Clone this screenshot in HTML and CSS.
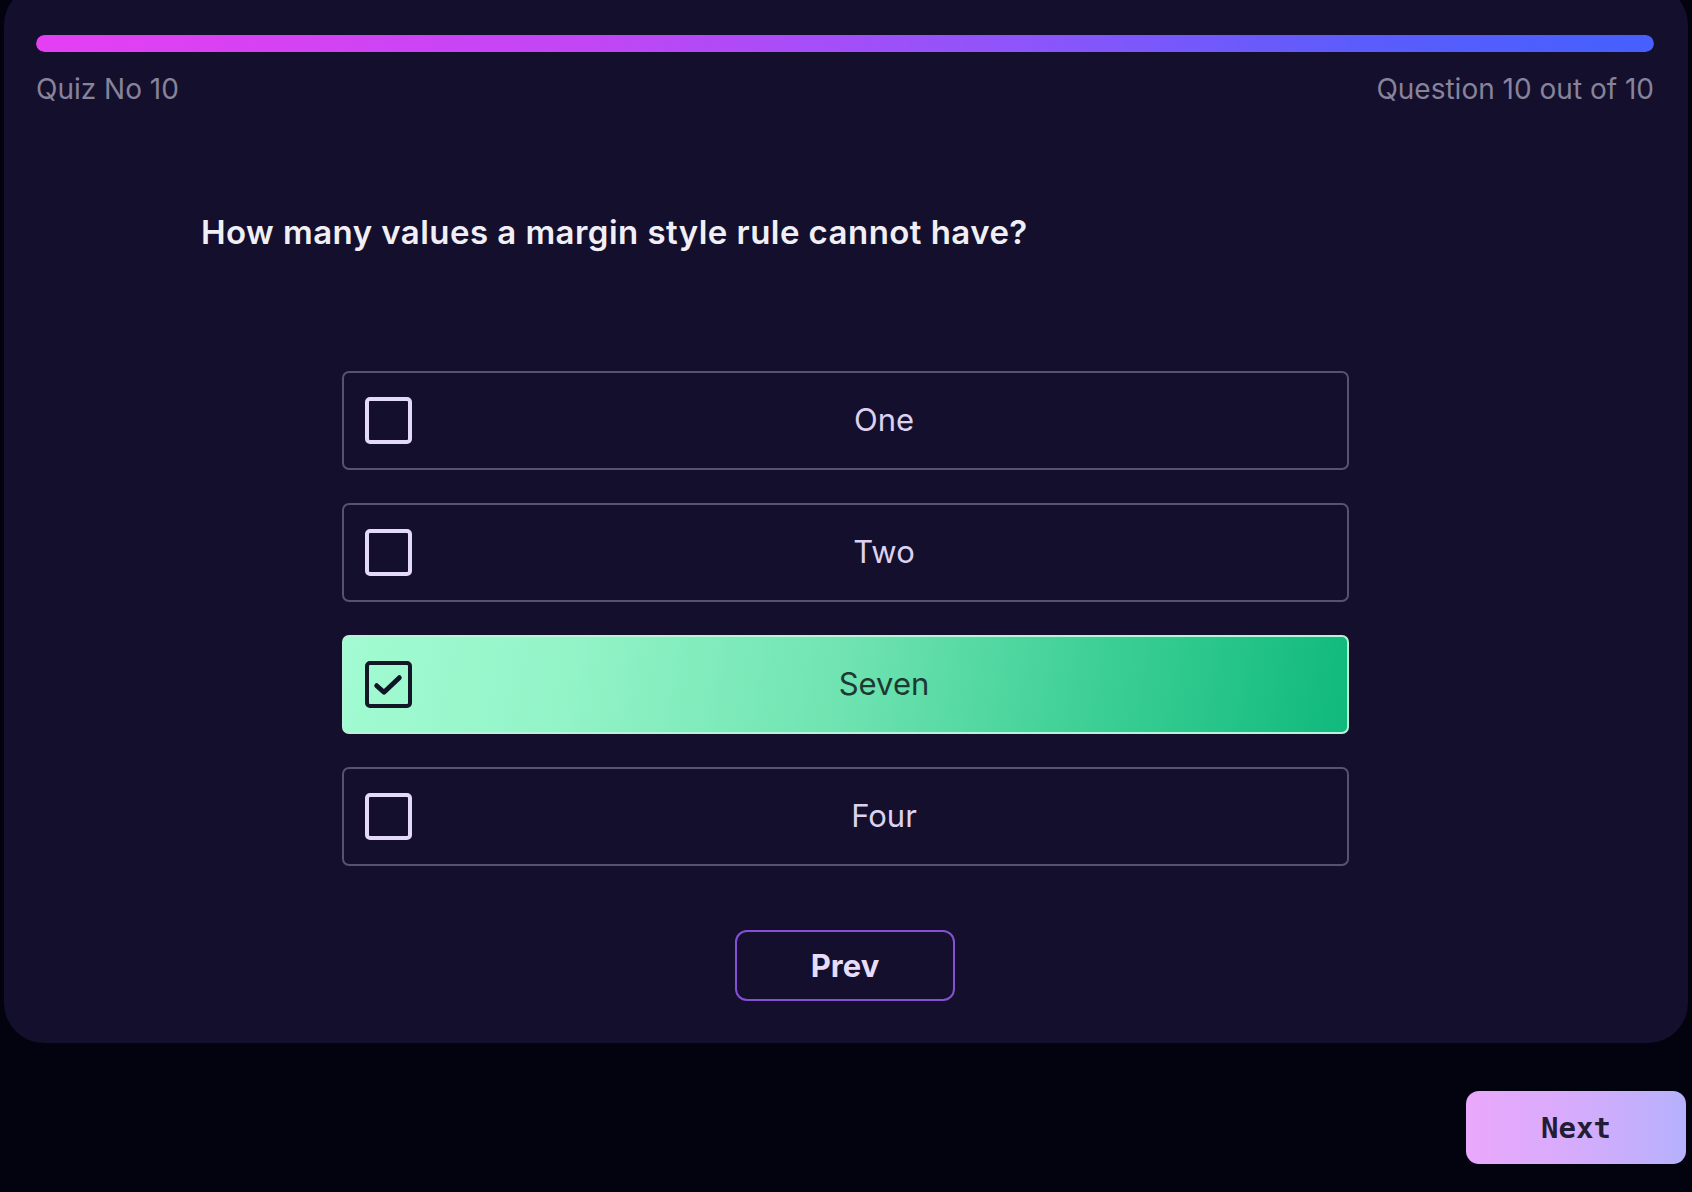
FILE: index.html
```html
<!DOCTYPE html>
<html lang="en">
<head>
<meta charset="utf-8">
<title>Quiz</title>
<link rel="stylesheet" href="styles.css">
</head>
<body>
<div class="page">
  <section class="card">
    <div class="progress"><div class="progress-fill"></div></div>
    <div class="meta">
      <span>Quiz No 10</span>
      <span>Question 10 out of 10</span>
    </div>
    <h1 class="question">How many values a margin style rule cannot have?</h1>
    <div class="options">
      <label class="option">
        <span class="box"></span>
        <span class="opt-text">One</span>
      </label>
      <label class="option">
        <span class="box"></span>
        <span class="opt-text">Two</span>
      </label>
      <label class="option selected">
        <span class="box">
          <svg viewBox="0 0 24 24" width="32" height="32"><path d="M3.5 12.5l5.5 5 11.5-11" fill="none" stroke="#0f1426" stroke-width="3.6" stroke-linecap="round" stroke-linejoin="round"/></svg>
        </span>
        <span class="opt-text">Seven</span>
      </label>
      <label class="option">
        <span class="box"></span>
        <span class="opt-text">Four</span>
      </label>
    </div>
    <div class="prev-row"><button class="btn-prev">Prev</button></div>
  </section>
  <div class="next-row"><button class="btn-next">Next</button></div>
</div>
</body>
</html>
```
FILE: styles.css
```css
* { box-sizing: border-box; }
html, body {
  margin: 0;
  padding: 0;
  background: #03030f;
  height: 100%;
  overflow: hidden;
}
body {
  font-family: Inter, "Liberation Sans", sans-serif;
}
.page {
  display: flex;
  flex-direction: column;
}
.card {
  margin: -15px 4px 0 4px;
  background: #150f2e;
  border-radius: 40px;
  padding: 50px 34px 42px 32px;
  display: flex;
  flex-direction: column;
}
.progress {
  height: 17px;
  border-radius: 9px;
  background: #2a2350;
  overflow: hidden;
}
.progress-fill {
  height: 100%;
  width: 100%;
  border-radius: 9px;
  background: linear-gradient(90deg, #e53ff2 0%, #c046f5 35%, #8b55fa 62%, #5b5cfb 82%, #4560fd 100%);
}
.meta {
  display: flex;
  justify-content: space-between;
  margin-top: 21px;
  font-size: 28px;
  line-height: 32px;
  color: #86839a;
  letter-spacing: 0;
}
.question {
  margin: 107px 0 0 165px;
  font-size: 33px;
  line-height: 40px;
  font-weight: 600;
  color: #f1eff6;
  letter-spacing: 0.45px;
}
.options {
  align-self: center;
  width: 1007px;
  margin-top: 119px;
  display: flex;
  flex-direction: column;
  gap: 33px;
}
.option {
  height: 99px;
  border: 2px solid #57526d;
  border-radius: 7px;
  display: flex;
  align-items: center;
  padding-left: 21px;
  padding-right: 0;
}
.box {
  width: 47px;
  height: 47px;
  border: 4px solid #e4d8fb;
  border-radius: 5px;
  flex: none;
  display: flex;
  align-items: center;
  justify-content: center;
}
.opt-text {
  flex: 1;
  text-align: center;
  padding-left: 10px;
  font-size: 31px;
  color: #dcd2f0;
  letter-spacing: 0;
  margin-top: -3px;
}
.option.selected {
  border-color: #b9f3d7;
  background: linear-gradient(100deg, #a2fbd2 0%, #93f4c8 22%, #6fe3b1 50%, #3ccf95 75%, #10b97c 100%);
}
.option.selected .box {
  border-color: #121627;
}
.option.selected .opt-text {
  color: #1d3a32;
}
.prev-row {
  display: flex;
  justify-content: center;
  margin-top: 64px;
}
.btn-prev {
  width: 220px;
  height: 71px;
  border: 2.5px solid #8450d4;
  border-radius: 12px;
  background: transparent;
  color: #e7ddf7;
  font-family: Inter, "Liberation Sans", sans-serif;
  font-weight: 700;
  font-size: 31px;
  letter-spacing: 0;
  cursor: pointer;
}
.next-row {
  display: flex;
  justify-content: flex-end;
  margin: 48px 6px 0 0;
}
.btn-next {
  width: 220px;
  height: 73px;
  border: none;
  border-radius: 13px;
  background: linear-gradient(90deg, #eaa8fb 0%, #d8abfc 45%, #b6b1fd 100%);
  color: #231d33;
  font-family: "DejaVu Sans Mono", "Liberation Mono", monospace;
  font-weight: 700;
  font-size: 29px;
  cursor: pointer;
}
```
